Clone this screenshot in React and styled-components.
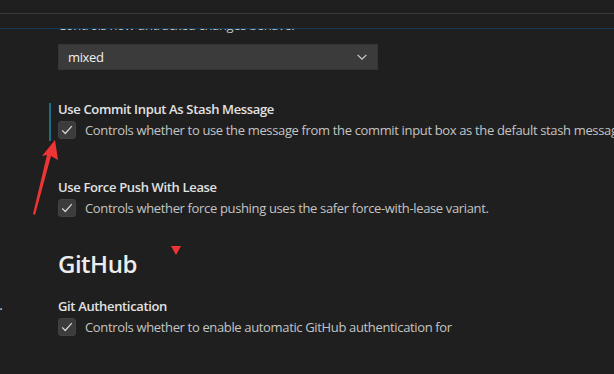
import React from "react";
import styled, { createGlobalStyle } from "styled-components";

const GlobalStyle = createGlobalStyle`
  html, body {
    margin: 0;
    padding: 0;
    background: #1f1f1f;
    overflow: hidden;
  }
  body {
    font-family: "Open Sans", "Noto Sans", sans-serif;
    font-size: 13px;
    letter-spacing: -0.35px;
    color: #cccccc;
  }
`;

const Editor = styled.div`
  position: relative;
  width: 614px;
  height: 374px;
  background: #1f1f1f;
  overflow: hidden;
`;

const Header = styled.div`
  height: 29px;
  box-sizing: border-box;
  border-bottom: 1px solid #143a58;
  display: flex;
  flex-direction: column;
`;

const HeaderRule = styled.div`
  margin-top: 13px;
  height: 1px;
  background: #3a3a3a;
`;

const Body = styled.div`
  display: flex;
  height: 344px;
  overflow: hidden;
`;

const Toc = styled.div`
  width: 55px;
  flex-shrink: 0;
  margin-left: -8px;
  padding-top: 267px;
  padding-right: 2px;
  color: #cccccc;
  font-size: 14px;
  letter-spacing: 0;
  line-height: 18px;
`;

const Content = styled.div`
  flex: 1;
  min-width: 0;
`;

const Item = styled.div`
  position: relative;
  padding-left: 9px;
  margin-top: ${(p) => p.$top || 0}px;

  &::before {
    content: "";
    position: absolute;
    left: 0;
    top: 3px;
    height: 38px;
    width: 2px;
    background: ${(p) => (p.$focused ? "#1c6e86" : "transparent")};
  }
`;

const Title = styled.div`
  font-weight: 600;
  color: #e2e2e2;
  line-height: 18px;
  white-space: nowrap;
`;

const Description = styled.div`
  color: #c4c4c4;
  line-height: 18px;
  white-space: nowrap;
`;

const CheckRow = styled.label`
  display: flex;
  align-items: center;
  gap: 9px;
  margin-top: 3px;
  white-space: nowrap;
  color: #c4c4c4;
  line-height: 18px;
`;

const Checkbox = styled.span`
  width: 18px;
  height: 18px;
  flex-shrink: 0;
  box-sizing: border-box;
  border-radius: 3px;
  background: #3c3c3c;
  border: 1px solid #424242;
  display: flex;
  align-items: center;
  justify-content: center;
`;

const Select = styled.div`
  margin-top: 10px;
  width: 320px;
  height: 26px;
  box-sizing: border-box;
  background: #3b3b3b;
  border: 1px solid #353535;
  display: flex;
  align-items: center;
  justify-content: space-between;
  padding: 0 8px 0 9px;
  color: #f0f0f0;
  font-size: 13px;
`;

const SectionTitle = styled.div`
  margin-top: ${(p) => p.$top}px;
  padding-left: 9px;
  font-size: 24px;
  font-weight: 600;
  letter-spacing: -0.5px;
  line-height: 32px;
  color: #ececec;
`;

const Annotation = styled.svg`
  position: absolute;
  left: 0;
  top: 0;
  pointer-events: none;
`;

const Check = () => (
  <svg width="14" height="14" viewBox="0 0 16 16">
    <path d="M2.5 8.5 L6 12 L13.5 3.5" fill="none" stroke="#d8d8d8" strokeWidth="1.4" />
  </svg>
);

const Chevron = () => (
  <svg width="14" height="14" viewBox="0 0 16 16">
    <path d="M3 5.5 L8 10.5 L13 5.5" fill="none" stroke="#d0d0d0" strokeWidth="1.3" />
  </svg>
);

const BoolSetting = ({ title, text, top, focused }) => (
  <Item $top={top} $focused={focused}>
    <Title>{title}</Title>
    <CheckRow>
      <Checkbox>
        <Check />
      </Checkbox>
      {text}
    </CheckRow>
  </Item>
);

const App = () => {
  return (
    <Editor>
      <GlobalStyle />
      <Header>
        <HeaderRule />
      </Header>
      <Body>
        <Toc>…</Toc>
        <Content>
          <Item $top={-13}>
            <Description>Controls how untracked changes behave.</Description>
            <Select>
              <span>mixed</span>
              <Chevron />
            </Select>
          </Item>
          <BoolSetting
            top={30}
            focused
            title="Use Commit Input As Stash Message"
            text="Controls whether to use the message from the commit input box as the default stash message."
          />
          <BoolSetting
            top={39}
            title="Use Force Push With Lease"
            text="Controls whether force pushing uses the safer force-with-lease variant."
          />
          <SectionTitle $top={31}>GitHub</SectionTitle>
          <BoolSetting
            top={17}
            title="Git Authentication"
            text="Controls whether to enable automatic GitHub authentication for"
          />
        </Content>
      </Body>
      <Annotation width="614" height="374">
        <path d="M55 140 L58 160 L51 156 L35 215 L33 214 L47 155 L42 156 Z" fill="#ee3535" />
        <path d="M171 246 L181 246 L176 255 Z" fill="#ee3535" />
      </Annotation>
    </Editor>
  );
};

export default App;
